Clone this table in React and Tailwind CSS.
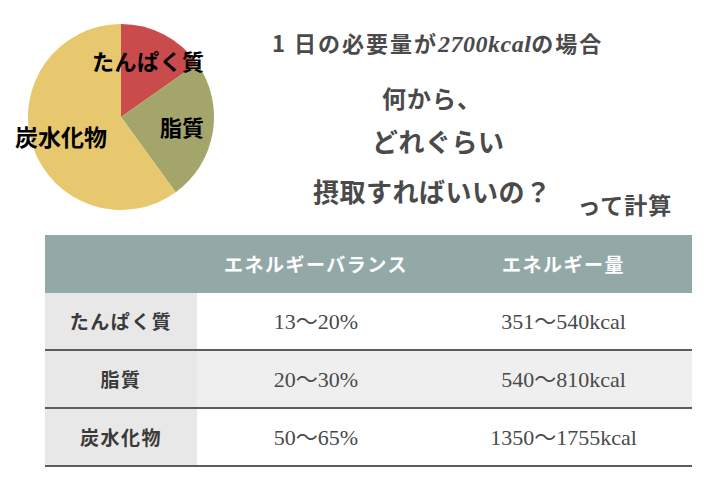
import React from "react";

const sans = { fontFamily: '"Noto Sans CJK JP", "Noto Sans", sans-serif' };
const serif = { fontFamily: '"Liberation Serif", "Noto Sans CJK JP", serif' };

const rows = [
  { name: "たんぱく質", ratio: "13〜20%", kcal: "351〜540kcal", shaded: false },
  { name: "脂質", ratio: "20〜30%", kcal: "540〜810kcal", shaded: true },
  { name: "炭水化物", ratio: "50〜65%", kcal: "1350〜1755kcal", shaded: false },
];

const PieChart = () => (
  <div className="relative w-[240px] h-[235px] shrink-0">
    <svg width="240" height="235" viewBox="0 0 240 235">
      <path d="M121 117 L121 24 A93 93 0 0 1 197.2 63.6 Z" fill="#c94b4b" />
      <path d="M121 117 L197.2 63.6 A93 93 0 0 1 175.7 192.2 Z" fill="#a3a56a" />
      <path d="M121 117 L175.7 192.2 A93 93 0 1 1 121 24 Z" fill="#e7c86f" />
    </svg>
    {/* labels on top of the pie */}
    <span className="absolute left-[92px] top-[49px] text-[22px] tracking-[0.5px] font-bold text-black leading-none whitespace-nowrap" style={sans}>
      たんぱく質
    </span>
    <span className="absolute left-[160px] top-[115px] text-[22px] font-bold text-black leading-none" style={sans}>
      脂質
    </span>
    <span className="absolute left-[15px] top-[125px] text-[23px] font-bold text-black leading-none whitespace-nowrap" style={sans}>
      炭水化物
    </span>
  </div>
);

const App = () => {
  return (
    <div className="w-[727px] h-[497px] bg-white overflow-hidden text-[#4a4a4a]">
      {/* ===== top: pie + heading ===== */}
      <div className="flex h-[235px]">
        <PieChart />
        <div className="flex flex-col items-start font-bold" style={sans}>
          <div className="ml-[32px] mt-[29px] text-[22px] tracking-[2px] leading-[26px] whitespace-nowrap">
            1 日の必要量が
            <span className="italic text-[24px] tracking-[0.5px]" style={serif}>2700kcal</span>
            の場合
          </div>
          <div className="ml-[142px] mt-[26px] text-[24px] tracking-[1px] leading-[30px]">何から、</div>
          <div className="ml-[132px] mt-[12px] text-[26px] tracking-[0.5px] leading-[32px]">どれぐらい</div>
          <div className="ml-[73px] mt-[17px] flex items-end whitespace-nowrap">
            <span className="text-[26px] tracking-[0.5px] leading-[34px]">摂取すればいいの？</span>
            <span className="ml-[26px] text-[23px] tracking-[1px] leading-[28px] -mb-[10px]">って計算</span>
          </div>
        </div>
      </div>

      {/* ===== table ===== */}
      <div className="mx-[45px] w-[647px]">
        <div className="grid grid-cols-[152px_238px_1fr] h-[58px] bg-[#93a9a8] text-white font-bold text-[19px] tracking-[1.5px]" style={sans}>
          <div />
          <div className="flex items-center justify-center">エネルギーバランス</div>
          <div className="flex items-center justify-center">エネルギー量</div>
        </div>
        {rows.map((r) => (
          <div
            key={r.name}
            className={`grid grid-cols-[152px_238px_1fr] h-[58px] border-b-2 border-[#5c5c5c] ${r.shaded ? "bg-[#efefef]" : "bg-white"}`}
          >
            <div className="flex items-center justify-center bg-[#e8e8e8] font-bold text-[19px] tracking-[1.5px] text-[#3a3a3a]" style={sans}>
              {r.name}
            </div>
            <div className="flex items-center justify-center text-[22px]" style={serif}>
              {r.ratio}
            </div>
            <div className="flex items-center justify-center text-[22px]" style={serif}>
              {r.kcal}
            </div>
          </div>
        ))}
      </div>
    </div>
  );
};

export default App;
